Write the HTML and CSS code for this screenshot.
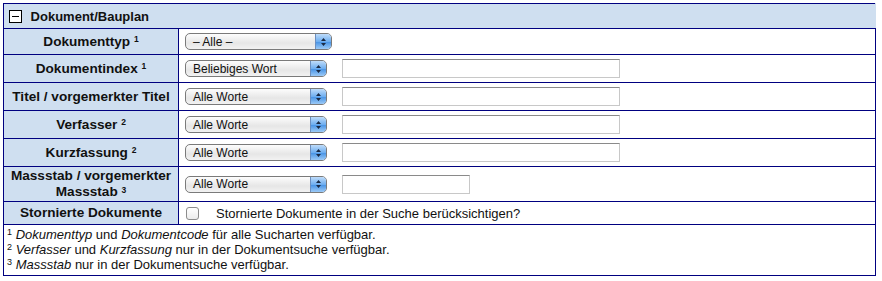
FILE: index.html
```html
<!DOCTYPE html>
<html lang="de">
<head>
    <meta charset="UTF-8">
    <title>Dokument/Bauplan</title>
    <link rel="stylesheet" href="styles.css">
</head>
<body>
    <table class="search-table">
        <tr class="section-head">
            <td colspan="2">
                <span class="toggle"><span class="toggle-bar"></span></span>
                Dokument/Bauplan
            </td>
        </tr>
        <tr class="first">
            <th>Dokumenttyp <sup>1</sup></th>
            <td>
                <span class="select wide"><span class="select-text">&ndash; Alle &ndash;</span><span class="select-btn"><svg width="7" height="10" viewBox="0 0 7 10"><path d="M3.5 1 L6 4 L1 4 Z M3.5 9 L6 6 L1 6 Z" fill="#1a2a44"/></svg></span></span>
            </td>
        </tr>
        <tr>
            <th>Dokumentindex <sup>1</sup></th>
            <td>
                <span class="select"><span class="select-text">Beliebiges Wort</span><span class="select-btn"><svg width="7" height="10" viewBox="0 0 7 10"><path d="M3.5 1 L6 4 L1 4 Z M3.5 9 L6 6 L1 6 Z" fill="#1a2a44"/></svg></span></span>
                <input type="text" class="text-field">
            </td>
        </tr>
        <tr>
            <th>Titel / vorgemerkter Titel</th>
            <td>
                <span class="select"><span class="select-text">Alle Worte</span><span class="select-btn"><svg width="7" height="10" viewBox="0 0 7 10"><path d="M3.5 1 L6 4 L1 4 Z M3.5 9 L6 6 L1 6 Z" fill="#1a2a44"/></svg></span></span>
                <input type="text" class="text-field">
            </td>
        </tr>
        <tr>
            <th>Verfasser <sup>2</sup></th>
            <td>
                <span class="select"><span class="select-text">Alle Worte</span><span class="select-btn"><svg width="7" height="10" viewBox="0 0 7 10"><path d="M3.5 1 L6 4 L1 4 Z M3.5 9 L6 6 L1 6 Z" fill="#1a2a44"/></svg></span></span>
                <input type="text" class="text-field">
            </td>
        </tr>
        <tr>
            <th>Kurzfassung <sup>2</sup></th>
            <td>
                <span class="select"><span class="select-text">Alle Worte</span><span class="select-btn"><svg width="7" height="10" viewBox="0 0 7 10"><path d="M3.5 1 L6 4 L1 4 Z M3.5 9 L6 6 L1 6 Z" fill="#1a2a44"/></svg></span></span>
                <input type="text" class="text-field">
            </td>
        </tr>
        <tr class="tall">
            <th>Massstab / vorgemerkter Massstab <sup>3</sup></th>
            <td>
                <span class="select"><span class="select-text">Alle Worte</span><span class="select-btn"><svg width="7" height="10" viewBox="0 0 7 10"><path d="M3.5 1 L6 4 L1 4 Z M3.5 9 L6 6 L1 6 Z" fill="#1a2a44"/></svg></span></span>
                <input type="text" class="text-field short">
            </td>
        </tr>
        <tr class="check-row">
            <th>Stornierte Dokumente</th>
            <td>
                <label class="check"><span class="check-box"></span>Stornierte Dokumente in der Suche berücksichtigen?</label>
            </td>
        </tr>
        <tr class="notes">
            <td colspan="2">
                <sup>1</sup> <em>Dokumenttyp</em> und <em>Dokumentcode</em> für alle Sucharten verfügbar.<br>
                <sup>2</sup> <em>Verfasser</em> und <em>Kurzfassung</em> nur in der Dokumentsuche verfügbar.<br>
                <sup>3</sup> <em>Massstab</em> nur in der Dokumentsuche verfügbar.
            </td>
        </tr>
    </table>
</body>
</html>
```

FILE: styles.css
```css
* {
    box-sizing: border-box;
}

body {
    margin: 3px;
    font-family: "Liberation Sans", Arial, sans-serif;
    font-size: 13px;
    color: #111;
    background: #fff;
}

.search-table {
    width: 873px;
    border-collapse: collapse;
}

.search-table th,
.search-table td {
    border: 1px solid #000080;
    padding: 0;
}

.search-table th {
    width: 175px;
    height: 28px;
    background: #cfdff0;
    font-size: 13.6px;
    font-weight: bold;
    text-align: center;
    line-height: 16px;
    padding: 0 3px;
}

.search-table td {
    padding-left: 6px;
    vertical-align: middle;
}

.search-table .first th {
    height: 26px;
}

sup {
    font-size: 8.5px;
    vertical-align: 4px;
    line-height: 0;
}

.tall sup {
    vertical-align: 3px;
}

.section-head td {
    height: 25px;
    background: #cfdff0;
    font-weight: bold;
    padding-left: 5px;
    border-right-color: #cfdff0;
}

.toggle {
    display: inline-block;
    width: 13px;
    height: 13px;
    border: 1px solid #000;
    background: #fff;
    vertical-align: -2px;
    margin-right: 5px;
    position: relative;
}

.toggle-bar {
    position: absolute;
    left: 2px;
    right: 2px;
    top: 5px;
    height: 1px;
    background: #000;
}

.select {
    display: inline-flex;
    align-items: center;
    width: 142px;
    height: 17px;
    border: 1px solid #7a7a7a;
    border-radius: 5px;
    background: linear-gradient(#fdfdfd, #e6e6e6 60%, #f2f2f2);
    font-size: 12px;
    vertical-align: middle;
    overflow: hidden;
}

.select.wide {
    width: 147px;
}

.select-text {
    flex: 1;
    padding-left: 7px;
    white-space: nowrap;
}

.select-btn {
    width: 16px;
    height: 100%;
    display: flex;
    align-items: center;
    justify-content: center;
    background: linear-gradient(#bfdcfa, #6eaef0 50%, #4a95e6 55%, #9ccaf7);
    border-left: 1px solid #6b8fc0;
}

.text-field {
    width: 278px;
    height: 19px;
    margin-left: 11px;
    border: 1px solid #c8c8c8;
    border-top-color: #8a8a8a;
    vertical-align: middle;
    padding: 0;
}

.text-field.short {
    width: 128px;
}

.search-table .tall th {
    height: 35px;
}

.search-table .check-row th {
    height: 23px;
}

.check {
    display: flex;
    align-items: center;
}

.check-box {
    width: 13px;
    height: 13px;
    border: 1px solid #8c8c8c;
    border-radius: 3px;
    background: linear-gradient(#fff, #ececec);
    margin-left: 1px;
    margin-right: 17px;
}

.notes td {
    height: 50px;
    padding: 2px 2px 3px 3px;
    font-size: 13px;
    line-height: 15px;
    vertical-align: top;
}

.notes sup {
    font-size: 9px;
}
```
